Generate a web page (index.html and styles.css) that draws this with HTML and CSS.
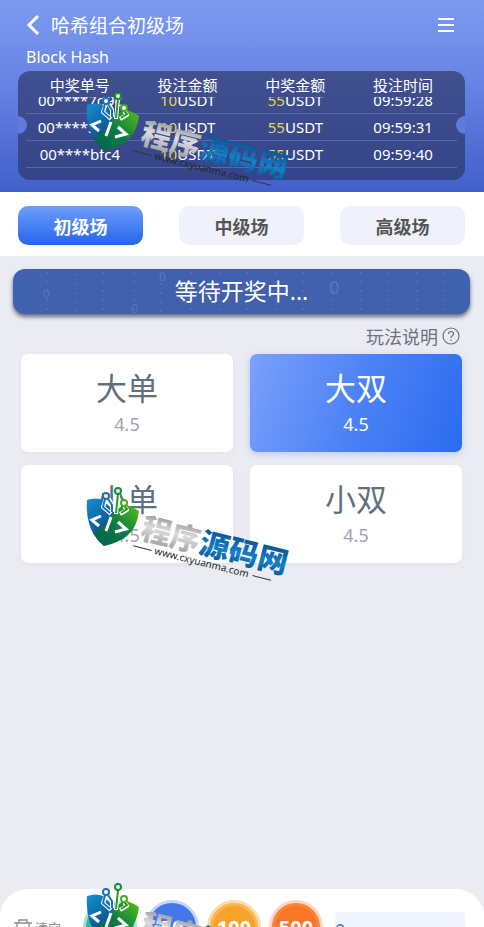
FILE: index.html
```html
<!DOCTYPE html>
<html lang="zh-CN">
<head>
    <meta charset="UTF-8">
    <meta name="viewport" content="width=device-width, initial-scale=1.0">
    <title>哈希组合初级场</title>
    <link rel="stylesheet" href="styles.css">
</head>
<body>
    <!-- Shared logo stamp -->
    <svg class="defs" width="0" height="0" aria-hidden="true">
        <defs>
            <linearGradient id="blueSide" x1="0" y1="0" x2="0.6" y2="1">
                <stop offset="0" stop-color="#1590cf"/>
                <stop offset="1" stop-color="#083a7c"/>
            </linearGradient>
            <linearGradient id="greenSide" x1="1" y1="0" x2="0" y2="1">
                <stop offset="0" stop-color="#5ac016"/>
                <stop offset="0.5" stop-color="#0b7a45"/>
                <stop offset="1" stop-color="#04604f"/>
            </linearGradient>
            <linearGradient id="silver" x1="0" y1="0" x2="0" y2="1">
                <stop offset="0.1" stop-color="#85878b"/>
                <stop offset="0.5" stop-color="#dcdddf"/>
                <stop offset="1" stop-color="#8b8d91"/>
            </linearGradient>
            <linearGradient id="blueText" x1="0" y1="0" x2="0" y2="1">
                <stop offset="0.1" stop-color="#0a4688"/>
                <stop offset="0.6" stop-color="#1580c6"/>
                <stop offset="1" stop-color="#0a4688"/>
            </linearGradient>
            <symbol id="stamp" viewBox="0 0 225 120">
                <path d="M12 30Q21 27 28 30L40 42L46 48L29 76Q17 66 14 53Q11 43 12 30Z" fill="url(#blueSide)"/>
                <path d="M38 43Q46 36 52 35Q58 37 64 41Q62 58 52 66Q43 73 29 76Q22 70 18 63Q32 56 38 43Z" fill="url(#greenSide)"/>
                <g fill="none" stroke="#fff" stroke-width="4" stroke-linejoin="round">
                    <path d="M31 29L28 37L36 44M34 29L37 35V42M43 24L41 44M49 36L52 40L45 44"/>
                </g>
                <g fill="none" stroke-width="2" stroke-linejoin="round">
                    <path d="M30 29L28 37L35 43M33 29L37 35V42" stroke="#1772b8"/>
                    <path d="M43 24L41 43M49 36L52 39L46 43M48 36L44 40" stroke="#24982c"/>
                </g>
                <circle cx="31" cy="26" r="3" fill="#fff" stroke="#1772b8" stroke-width="2"/>
                <circle cx="43" cy="21" r="3" fill="#fff" stroke="#119136" stroke-width="2"/>
                <circle cx="49" cy="33" r="3" fill="#fff" stroke="#45ab20" stroke-width="2"/>
                <path d="M26 46L17 50L24 56M36 47L31 61M43 52L51 59L40 62" fill="none" stroke="#fff" stroke-width="3"/>
                <g transform="translate(64 69) rotate(14)">
                    <text class="stamp-name" x="0" y="-1"><tspan fill="url(#silver)">程序</tspan><tspan fill="url(#blueText)">源码网</tspan></text>
                    <path d="M-4 8H15M119 8H138" stroke="#34373c" stroke-width="1"/>
                    <text class="stamp-url" x="18" y="11">www.cxyuanma.com</text>
                </g>
            </symbol>
        </defs>
    </svg>

    <div class="page">
        <header class="header">
            <div class="title-bar">
                <button class="icon-button" type="button" aria-label="返回">
                    <svg width="14" height="22" viewBox="0 0 14 22"><path d="M12 2L3 11L12 20" fill="none" stroke="#fff" stroke-width="3"/></svg>
                </button>
                <h1>哈希组合初级场</h1>
                <button class="icon-button menu" type="button" aria-label="菜单">
                    <svg width="16" height="16" viewBox="0 0 16 16"><path d="M0 2H16M0 8H16M0 14H16" stroke="#fff" stroke-width="2"/></svg>
                </button>
            </div>
            <p class="subtitle">Block Hash</p>
            <div class="record">
                <table>
                    <thead>
                        <tr><th>中奖单号</th><th>投注金额</th><th>中奖金额</th><th>投注时间</th></tr>
                    </thead>
                    <tbody>
                        <tr><td>00****7d9c</td><td><b>10</b>USDT</td><td><b>55</b>USDT</td><td>09:59:28</td></tr>
                        <tr><td>00****3ae1</td><td><b>10</b>USDT</td><td><b>55</b>USDT</td><td>09:59:31</td></tr>
                        <tr><td>00****bfc4</td><td><b>10</b>USDT</td><td><b>55</b>USDT</td><td>09:59:40</td></tr>
                    </tbody>
                </table>
            </div>
        </header>

        <nav class="tabs">
            <button class="tab active" type="button">初级场</button>
            <button class="tab" type="button">中级场</button>
            <button class="tab" type="button">高级场</button>
        </nav>

        <main class="main">
            <div class="banner">
                <svg class="digits" viewBox="0 0 457 45" preserveAspectRatio="xMidYMid slice" aria-hidden="true">
                    <path d="M34 3V45M62 5V45M90 3V45M121 3V45M148 5V45M178 3V45M206 3V45M234 3V45M262 3V45M290 3V45M320 3V45M348 3V45M376 3V45M404 3V45M432 3V45" stroke="#7e9fdb" stroke-width="2" stroke-dasharray="2 7"/>
                    <text x="30" y="29">0</text>
                    <text x="316" y="25" class="large">0</text>
                    <text x="146" y="12">0</text>
                    <text x="118" y="44">0</text>
                </svg>
                <span>等待开奖中...</span>
            </div>
            <a class="rules" href="#">玩法说明
                <svg width="18" height="18" viewBox="0 0 18 18" fill="none" stroke="#6b7280" stroke-width="1.2">
                    <circle cx="9" cy="9" r="8"/>
                    <path d="M6.5 7Q6.5 4.5 9 4.5T11.5 7C11.5 8.6 9 8.8 9 11M9 12.5V14"/>
                </svg>
            </a>
            <div class="bets">
                <button class="bet" type="button"><span class="name">大单</span><span class="odds">4.5</span></button>
                <button class="bet active" type="button"><span class="name">大双</span><span class="odds">4.5</span></button>
                <button class="bet" type="button"><span class="name">小单</span><span class="odds">4.5</span></button>
                <button class="bet" type="button"><span class="name">小双</span><span class="odds">4.5</span></button>
            </div>
        </main>

        <footer class="chip-bar">
            <button class="clear" type="button">
                <svg width="20" height="20" viewBox="0 0 20 20" fill="none" stroke="#8b8f98" stroke-width="1.4"><path d="M1 5H19M6 5V2H14V5M4 5V19H16V5M8 9V15M12 9V15"/></svg>
                清空
            </button>
            <div class="chips">
                <button class="chip teal" type="button">10</button>
                <button class="chip blue" type="button">50</button>
                <button class="chip gold" type="button">100</button>
                <button class="chip orange" type="button">500</button>
            </div>
            <input class="amount" type="text" value="0" aria-label="投注金额">
        </footer>

        <svg class="stamp stamp-top" aria-hidden="true"><use href="#stamp"/></svg>
        <svg class="stamp stamp-middle" aria-hidden="true"><use href="#stamp"/></svg>
        <svg class="stamp stamp-bottom" aria-hidden="true"><use href="#stamp"/></svg>
    </div>
</body>
</html>
```
FILE: styles.css
```css
* {
    box-sizing: border-box;
}
body {
    margin: 0;
    font-family: "Noto Sans", "Noto Sans CJK SC", sans-serif;
    background-color: #ebebf2;
}
button, input {
    font-family: inherit;
    border: none;
    padding: 0;
    cursor: pointer;
}
.defs {
    position: absolute;
}
.page {
    position: relative;
    display: flex;
    flex-direction: column;
    height: 100vh;
    overflow: hidden;
}

/* header */
.header {
    flex: none;
    padding: 0 19px 12px 18px;
    background: linear-gradient(#7d9bf0, #6682e4 45%, #435fca);
    color: #fff;
}
.title-bar {
    display: flex;
    align-items: center;
    height: 48px;
    padding: 2px 11px 0 8px;
}
.title-bar h1 {
    flex: 1;
    margin: 0 0 0 11px;
    font-size: 19px;
    font-weight: 400;
}
.icon-button {
    display: flex;
    background: none;
}
.subtitle {
    margin: 0 8px 5px;
    font-size: 16px;
    line-height: 18px;
}

/* winning records */
.record {
    position: relative;
    padding: 0 8px 4px;
    border-radius: 12px;
    background: linear-gradient(#41508f, #344489);
    overflow: hidden;
}
.record::before,
.record::after {
    content: "";
    position: absolute;
    top: 45px;
    width: 18px;
    height: 18px;
    border-radius: 50%;
    background-color: #607bdd;
}
.record::before {
    left: -9px;
}
.record::after {
    right: -9px;
}
.record table,
.record thead,
.record tbody {
    display: block;
}
.record tr {
    display: grid;
    grid-template-columns: repeat(4, 1fr);
    text-align: center;
    font-size: 15px;
    line-height: 26px;
}
.record th,
.record td {
    padding: 0;
    font-weight: 400;
}
.record th {
    line-height: 28px;
    height: 26px;
}
.record tbody {
    height: 79px;
    overflow: hidden;
}
.record tbody tr {
    border-bottom: 1px solid #5969a8;
}
.record tbody tr:first-child {
    margin-top: -10px;
}
.record b {
    font-weight: 400;
    color: #e5d262;
}

/* level tabs */
.tabs {
    flex: none;
    display: flex;
    gap: 36px;
    padding: 14px 19px 11px 18px;
    background-color: #fff;
}
.tab {
    flex: 1;
    height: 39px;
    border-radius: 10px;
    background-color: #eff2fb;
    color: #555;
    font-size: 18px;
    font-weight: 700;
}
.tab.active {
    background: linear-gradient(#6f9efb, #2465ec);
    color: #fff;
}

/* game area */
.main {
    flex: 1;
    padding: 13px 14px 0 13px;
}
.banner {
    position: relative;
    height: 45px;
    border-radius: 12px;
    background-color: #4162ae;
    box-shadow: 0 3px 4px #666e82;
    color: #fff;
    font-size: 23px;
    line-height: 45px;
    text-align: center;
    overflow: hidden;
}
.banner span {
    position: relative;
}
.digits {
    position: absolute;
    left: 0;
    top: 0;
    width: 100%;
    height: 100%;
    opacity: 0.2;
    fill: #a9c1f0;
    font-size: 12px;
}
.digits .large {
    font-size: 18px;
}
.rules {
    display: flex;
    justify-content: flex-end;
    align-items: center;
    gap: 4px;
    height: 40px;
    padding: 4px 10px 0 0;
    color: #6b7280;
    font-size: 18px;
    text-decoration: none;
}
.bets {
    display: grid;
    grid-template-columns: 1fr 1fr;
    gap: 13px 17px;
    padding: 0 8px;
}
.bet {
    display: flex;
    flex-direction: column;
    align-items: center;
    height: 98px;
    padding-top: 13px;
    border-radius: 7px;
    background-color: #fff;
    box-shadow: 0 1px 4px #e0e1ea;
    color: #5f7080;
}
.bet .name {
    font-size: 31px;
    line-height: 42px;
}
.bet .odds {
    color: #9da4ae;
    font-size: 18px;
    line-height: 30px;
}
.bet.active {
    background: linear-gradient(110deg, #7aa1fb, #4d82f6 50%, #2b6bef);
    box-shadow: 0 2px 6px #b5c9f5;
    color: #fff;
}
.bet.active .odds {
    color: #fff;
}

/* chips */
.chip-bar {
    flex: none;
    display: flex;
    align-items: flex-start;
    height: 38px;
    padding: 11px 19px 0 13px;
    border-radius: 28px 28px 0 0;
    background-color: #fff;
    overflow: hidden;
}
.clear {
    display: flex;
    align-items: center;
    gap: 2px;
    width: 70px;
    margin-top: 18px;
    background: none;
    color: #8b8f98;
    font-size: 13px;
    line-height: 20px;
}
.chips {
    display: flex;
    gap: 8px;
}
.chip {
    width: 54px;
    height: 54px;
    border: 3px solid #fbdcae;
    border-radius: 50%;
    color: #fff;
    font-size: 20px;
    font-weight: 700;
}
.chip.teal {
    background-color: #35b99b;
    border-color: #a5e0d2;
}
.chip.blue {
    background-color: #4478e8;
    border-color: #c3d7fb;
}
.chip.gold {
    background-color: #f5a32c;
    box-shadow: inset 0 0 0 3px #f8b84e;
}
.chip.orange {
    background-color: #f87627;
    border-color: #fbd6bc;
    box-shadow: inset 0 0 0 3px #fa8639;
}
.amount {
    flex: 1;
    min-width: 0;
    height: 36px;
    margin: 12px 0 0 12px;
    border-radius: 4px;
    background-color: #f0f4fd;
    color: #4b77c9;
    font-size: 18px;
}

/* logo stamps lie over the page */
.stamp {
    position: absolute;
    left: 75px;
    width: 225px;
    height: 120px;
    pointer-events: none;
}
.stamp-top {
    top: 75px;
}
.stamp-middle {
    top: 470px;
}
.stamp-bottom {
    top: 866px;
}
.stamp-name {
    font-family: "Noto Sans CJK SC", sans-serif;
    font-size: 30px;
    font-weight: 900;
}
.stamp-url {
    fill: #25282d;
    font-size: 10px;
}
```
